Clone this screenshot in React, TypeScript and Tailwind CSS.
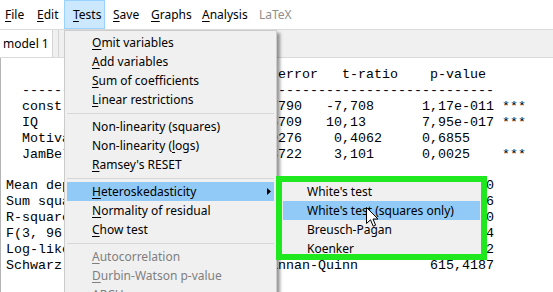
import React from "react";

type Seg = [number, string];

// place text pieces at fixed columns of a monospace line
function row(segs: Seg[]): string {
  let s = "";
  for (const [col, text] of segs) {
    while (s.length < col) s += " ";
    s += text;
  }
  return s;
}

const lines: string[] = [
  row([[15, "coefficient"], [29, "std. error"], [42, "t-ratio"], [53, "p-value"]]),
  row([[2, "-----------------------------------------------------------"]]),
  row([[2, "const"], [17, "-75,6017"], [29, "9,787790"], [40, "-7,708"], [52, "1,17e-011"], [62, "***"]]),
  row([[2, "IQ"], [17, "1,07110"], [28, "0,1056709"], [40, "10,13"], [52, "7,95e-017"], [62, "***"]]),
  row([[2, "Motivation"], [17, "0,0373"], [28, "0,0919276"], [41, "0,4062"], [52, "0,6855"]]),
  row([[2, "JamBelajar"], [17, "0,394912"], [28, "0,1273722"], [41, "3,101"], [52, "0,0025"], [62, "***"]]),
  "",
  row([[0, "Mean dependent var"], [21, "70,45000"], [32, "S.D. dependent var"], [53, "14,19480"]]),
  row([[0, "Sum squared resid"], [21, "6513,826"], [32, "S.E. of regression"], [53, "8,237296"]]),
  row([[0, "R-squared"], [21, "0,672480"], [32, "Adjusted R-squared"], [53, "0,662250"]]),
  row([[0, "F(3, 96)"], [21, "65,70224"], [32, "P-value(F)"], [53, "1,69e-24"]]),
  row([[0, "Log-likelihood"], [20, "-299,5206"], [32, "Akaike criterion"], [53, "607,0412"]]),
  row([[0, "Schwarz criterion"], [21, "617,4619"], [32, "Hannan-Quinn"], [53, "615,4187"]]),
];

interface MenuItem {
  label?: string;
  u?: number;
  disabled?: boolean;
  sep?: boolean;
  sub?: boolean;
  active?: boolean;
}

const testsMenu: MenuItem[] = [
  { label: "Omit variables", u: 0 },
  { label: "Add variables", u: 0 },
  { label: "Sum of coefficients", u: 0 },
  { label: "Linear restrictions", u: 0 },
  { sep: true },
  { label: "Non-linearity (squares)" },
  { label: "Non-linearity (logs)", u: 15 },
  { label: "Ramsey's RESET", u: 0 },
  { sep: true },
  { label: "Heteroskedasticity", u: 0, sub: true, active: true },
  { label: "Normality of residual", u: 0 },
  { label: "Chow test", u: 0 },
  { sep: true },
  { label: "Autocorrelation", u: 0, disabled: true },
  { label: "Durbin-Watson p-value", u: 0, disabled: true },
  { label: "ARCH", u: 0, disabled: true },
];

const hetMenu = ["White's test", "White's test (squares only)", "Breusch-Pagan", "Koenker"];

function Label({ text, u }: { text: string; u?: number }) {
  if (u === undefined) return <span>{text}</span>;
  return (
    <span>
      {text.slice(0, u)}
      <span className="underline underline-offset-[2px]">{text[u]}</span>
      {text.slice(u + 1)}
    </span>
  );
}

const bar: { text: string; w: string; disabled?: boolean; open?: boolean }[] = [
  { text: "File", w: "w-[30px] pl-[5px]" },
  { text: "Edit", w: "w-[34px] pl-[7px]" },
  { text: "Tests", w: "w-[41px] pl-[8px]", open: true },
  { text: "Save", w: "w-[39px] pl-[8px]" },
  { text: "Graphs", w: "w-[51px] pl-[7px]" },
  { text: "Analysis", w: "w-[56px] pl-[7px]" },
  { text: "LaTeX", w: "w-[50px] pl-[8px]", disabled: true },
];

export default function App() {
  return (
    <div className="relative h-[292px] w-[553px] overflow-hidden bg-white font-['Noto_Sans',sans-serif] text-[12px] text-black">
      {/* menu bar */}
      <div className="flex h-[29px] bg-white">
        {bar.map((b) => (
          <div
            key={b.text}
            className={`flex h-full items-center ${b.w} ${
              b.open ? "border border-[#99d1ff] bg-[#cce8ff]" : ""
            } ${b.disabled ? "text-[#8d8d8d]" : ""}`}
          >
            {b.disabled ? b.text : <Label text={b.text} u={0} />}
          </div>
        ))}
      </div>

      {/* tab strip */}
      <div className="flex h-[29px] border-y border-[#dadada] bg-[#f0f0f0]">
        <div className="flex h-full w-[52px] items-center bg-white pl-[3px]">model 1</div>
        <div className="h-full w-[6px] border-l border-[#d4d4d4]" />
        <div className="h-full w-[5px] border-l border-[#d4d4d4]" />
      </div>

      {/* output text */}
      <pre className="h-[235px] border-l border-[#b4b4b4] pl-[5px] pt-[9px] font-['Liberation_Mono',monospace] text-[13.33px] leading-[15.9px] text-black">
        {lines.join("\n")}
      </pre>

      {/* Tests dropdown */}
      <div className="absolute left-[64px] top-[30px] w-[213px] border border-[#cccccc] bg-[#f0f0f0] p-[2px] shadow-[3px_3px_3px_rgba(0,0,0,0.4)]">
        {testsMenu.map((it, i) =>
          it.sep ? (
            <div key={i} className="flex h-[8px] items-center">
              <div className="h-px w-full bg-[#d7d7d7]" />
            </div>
          ) : (
            <div
              key={i}
              className={`flex h-[19px] items-center pl-[25px] ${it.active ? "bg-[#91c9f7]" : ""} ${
                it.disabled ? "text-[#7f7f7f]" : ""
              }`}
            >
              <Label text={it.label!} u={it.u} />
              {it.sub && (
                <svg className="ml-auto mr-[3px]" width="4" height="7" viewBox="0 0 4 7">
                  <polygon points="0,0 4,3.5 0,7" fill="#000" />
                </svg>
              )}
            </div>
          )
        )}
      </div>

      {/* Heteroskedasticity submenu, outlined in green */}
      <div className="absolute left-[276px] top-[176px] h-[84px] w-[211px] overflow-hidden border-[6px] border-[#1fe81f] bg-[#f0f0f0]">
        {hetMenu.map((t, i) => (
          <div
            key={t}
            className={`mx-[1px] flex h-[19px] items-center pl-[24px] ${i === 1 ? "bg-[#91c9f7]" : ""}`}
          >
            {t}
          </div>
        ))}
      </div>

      {/* mouse pointer */}
      <svg className="absolute left-[366px] top-[207px]" width="13" height="21" viewBox="0 0 13 21">
        <path
          d="M0.5 0.5 L0.5 16.5 L4.5 12.8 L7.2 19.2 L9.6 18.2 L7 12 L12 12 Z"
          fill="#fff"
          stroke="#000"
          strokeWidth="1"
          strokeLinejoin="round"
        />
      </svg>
    </div>
  );
}
